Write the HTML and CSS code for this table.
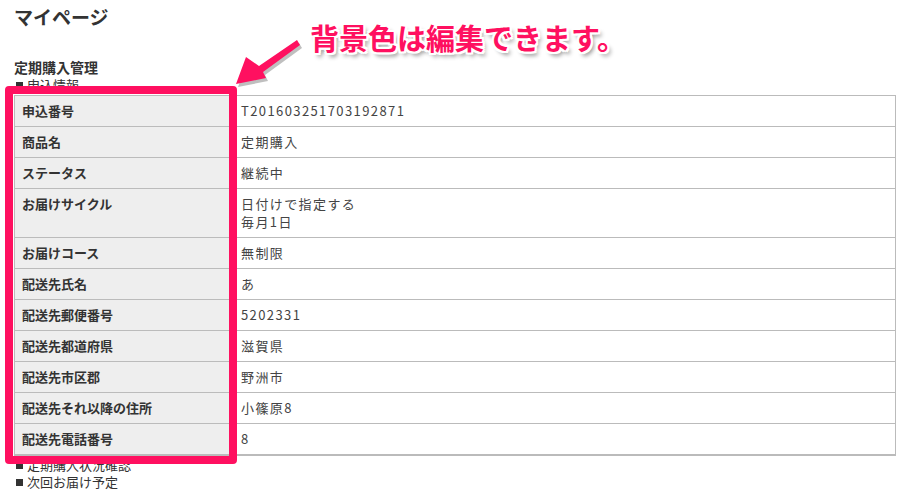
FILE: index.html
```html
<!DOCTYPE html>
<html lang="ja">
<head>
    <meta charset="UTF-8">
    <title>マイページ</title>
    <link rel="stylesheet" href="styles.css">
</head>

<body>
    <div class="page">
        <h1>マイページ</h1>

        <h3>定期購入管理</h3>
        <p class="item">申込情報</p>

        <table class="info">
            <tr><th>申込番号</th><td>T201603251703192871</td></tr>
            <tr><th>商品名</th><td>定期購入</td></tr>
            <tr><th>ステータス</th><td>継続中</td></tr>
            <tr><th>お届けサイクル</th><td>日付けで指定する<br>毎月1日</td></tr>
            <tr><th>お届けコース</th><td>無制限</td></tr>
            <tr><th>配送先氏名</th><td>あ</td></tr>
            <tr><th>配送先郵便番号</th><td>5202331</td></tr>
            <tr><th>配送先都道府県</th><td>滋賀県</td></tr>
            <tr><th>配送先市区郡</th><td>野洲市</td></tr>
            <tr><th>配送先それ以降の住所</th><td>小篠原8</td></tr>
            <tr><th>配送先電話番号</th><td>8</td></tr>
        </table>

        <p class="item">定期購入状況確認</p>
        <p class="item">次回お届け予定</p>
    </div>

    <!-- annotation over the screenshot -->
    <div class="mark-box"></div>
    <svg class="mark-arrow" width="80" height="60" viewBox="230 34 80 60">
        <polygon class="arrow-shadow" points="238,87 248,60 261,69 299,43 302,48 265,75 268,81" />
        <polygon class="arrow-body" points="236,84 246,57 259,66 297,40 300,45 263,72 266,78" />
    </svg>
    <div class="mark-text">背景色は編集できます。</div>
</body>

</html>
```

FILE: styles.css
```css
body {
    font-family: "Noto Sans CJK JP", "DejaVu Sans", sans-serif;
    color: #333;
    margin: 0;
    padding: 0;
    background-color: #fff;
}

.page {
    padding: 5px 16px 0 14px;
}

h1 {
    font-size: 19px;
    font-weight: bold;
    line-height: 24px;
    margin: 0;
    color: #333;
}

h3 {
    font-size: 14px;
    font-weight: bold;
    line-height: 18px;
    margin: 29px 0 0 0;
}

.item {
    font-size: 13px;
    line-height: 17px;
    margin: 0;
    padding-left: 2px;
}

.item::before {
    content: '';
    display: inline-block;
    width: 7px;
    height: 7px;
    background-color: #333;
    margin-right: 4px;
    vertical-align: 1px;
}

.info {
    width: 100%;
    margin-top: 2px;
    border-collapse: collapse;
    border: 1px solid #bbb;
    border-bottom: 2px solid #bbb;
    font-size: 13px;
}

.info th,
.info td {
    border: 1px solid #bbb;
    padding: 6px 10px 6px 7px;
    height: 18px;
    line-height: 18px;
    vertical-align: top;
    text-align: left;
}

.info th {
    width: 198px;
    background-color: #eee;
    font-weight: bold;
}

.info td {
    padding-left: 10px;
    letter-spacing: 1.4px;
    color: #444;
}

/* annotation */

.mark-box {
    position: absolute;
    left: 5px;
    top: 86px;
    width: 216px;
    height: 362px;
    border: 8px solid #ff1060;
    border-radius: 4px;
}

.mark-arrow {
    position: absolute;
    left: 230px;
    top: 34px;
}

.arrow-body {
    fill: #ff1060;
}

.arrow-shadow {
    fill: rgba(0, 0, 0, 0.25);
}

.mark-text {
    position: absolute;
    left: 310px;
    top: 17px;
    font-size: 29px;
    line-height: 40px;
    font-weight: bold;
    color: #ff1060;
    text-shadow:
        2px 0 0 #fff, -2px 0 0 #fff, 0 2px 0 #fff, 0 -2px 0 #fff,
        2px 2px 0 #fff, -2px -2px 0 #fff, 2px -2px 0 #fff, -2px 2px 0 #fff,
        3px 4px 4px rgba(0, 0, 0, 0.45);
}
```
